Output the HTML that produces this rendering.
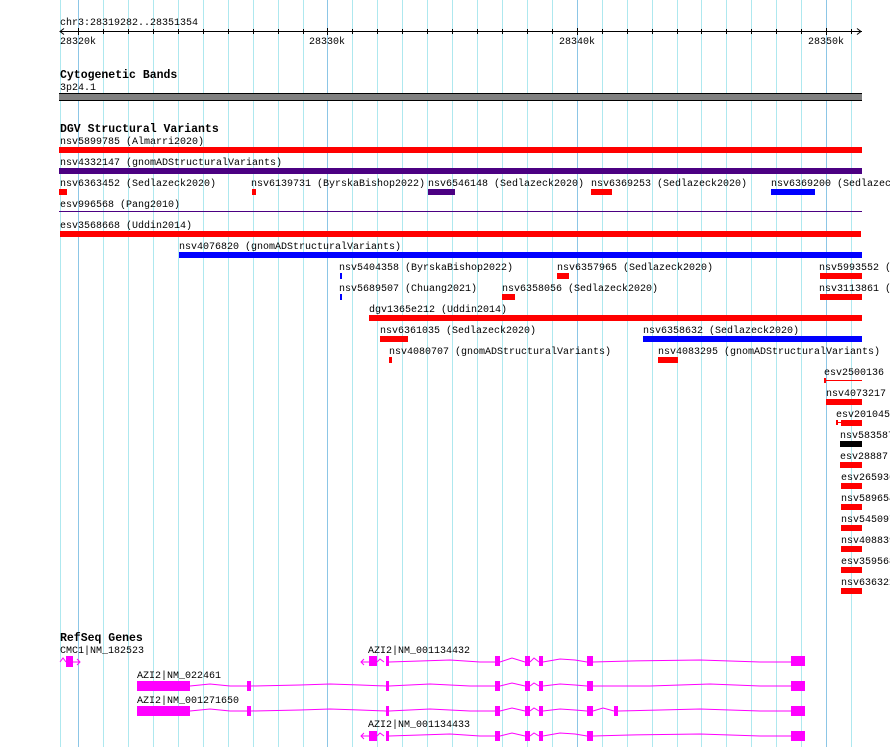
<!DOCTYPE html>
<html><head><meta charset="utf-8"><style>
html,body{margin:0;padding:0;background:#fff;width:890px;height:747px;overflow:hidden}
svg{display:block}
text{font-family:"Liberation Mono","DejaVu Sans Mono",monospace;font-size:10px;fill:#000}
.h{font-weight:bold;font-size:11.5px}
.g{stroke:#aee8ef;stroke-width:1}
.gd{stroke:#8cc6e6;stroke-width:1}
.r{fill:#f00}.p{fill:#4b0082}.b{fill:#00f}.m{fill:#f0f}
</style></head><body>
<svg width="890" height="747" xmlns="http://www.w3.org/2000/svg">
<g>
<line class="g" x1="60.5" y1="0" x2="60.5" y2="747"/>
<line class="gd" x1="78.5" y1="0" x2="78.5" y2="747"/>
<line class="g" x1="103.5" y1="0" x2="103.5" y2="747"/>
<line class="g" x1="128.5" y1="0" x2="128.5" y2="747"/>
<line class="g" x1="153.5" y1="0" x2="153.5" y2="747"/>
<line class="g" x1="178.5" y1="0" x2="178.5" y2="747"/>
<line class="g" x1="203.5" y1="0" x2="203.5" y2="747"/>
<line class="g" x1="228.5" y1="0" x2="228.5" y2="747"/>
<line class="g" x1="253.5" y1="0" x2="253.5" y2="747"/>
<line class="g" x1="278.5" y1="0" x2="278.5" y2="747"/>
<line class="g" x1="303.5" y1="0" x2="303.5" y2="747"/>
<line class="gd" x1="327.5" y1="0" x2="327.5" y2="747"/>
<line class="g" x1="352.5" y1="0" x2="352.5" y2="747"/>
<line class="g" x1="377.5" y1="0" x2="377.5" y2="747"/>
<line class="g" x1="402.5" y1="0" x2="402.5" y2="747"/>
<line class="g" x1="427.5" y1="0" x2="427.5" y2="747"/>
<line class="g" x1="452.5" y1="0" x2="452.5" y2="747"/>
<line class="g" x1="477.5" y1="0" x2="477.5" y2="747"/>
<line class="g" x1="502.5" y1="0" x2="502.5" y2="747"/>
<line class="g" x1="527.5" y1="0" x2="527.5" y2="747"/>
<line class="g" x1="552.5" y1="0" x2="552.5" y2="747"/>
<line class="gd" x1="577.5" y1="0" x2="577.5" y2="747"/>
<line class="g" x1="602.5" y1="0" x2="602.5" y2="747"/>
<line class="g" x1="627.5" y1="0" x2="627.5" y2="747"/>
<line class="g" x1="652.5" y1="0" x2="652.5" y2="747"/>
<line class="g" x1="677.5" y1="0" x2="677.5" y2="747"/>
<line class="g" x1="701.5" y1="0" x2="701.5" y2="747"/>
<line class="g" x1="726.5" y1="0" x2="726.5" y2="747"/>
<line class="g" x1="751.5" y1="0" x2="751.5" y2="747"/>
<line class="g" x1="776.5" y1="0" x2="776.5" y2="747"/>
<line class="g" x1="801.5" y1="0" x2="801.5" y2="747"/>
<line class="gd" x1="826.5" y1="0" x2="826.5" y2="747"/>
<line class="g" x1="851.5" y1="0" x2="851.5" y2="747"/>
</g>
<!-- ruler -->
<text x="60" y="25">chr3:28319282..28351354</text>
<line x1="60" y1="31.5" x2="862" y2="31.5" stroke="#000"/>
<path d="M64 28.5 L60 31.5 L64 34.5 M857 28.5 L861 31.5 L857 34.5" stroke="#000" fill="none"/>
<g stroke="#000">
<line x1="78.5" y1="28" x2="78.5" y2="35"/><line x1="103.5" y1="29" x2="103.5" y2="34"/><line x1="128.5" y1="29" x2="128.5" y2="34"/><line x1="153.5" y1="29" x2="153.5" y2="34"/><line x1="178.5" y1="29" x2="178.5" y2="34"/><line x1="203.5" y1="29" x2="203.5" y2="34"/><line x1="228.5" y1="29" x2="228.5" y2="34"/><line x1="253.5" y1="29" x2="253.5" y2="34"/><line x1="278.5" y1="29" x2="278.5" y2="34"/><line x1="303.5" y1="29" x2="303.5" y2="34"/><line x1="327.5" y1="28" x2="327.5" y2="35"/><line x1="352.5" y1="29" x2="352.5" y2="34"/><line x1="377.5" y1="29" x2="377.5" y2="34"/><line x1="402.5" y1="29" x2="402.5" y2="34"/><line x1="427.5" y1="29" x2="427.5" y2="34"/><line x1="452.5" y1="29" x2="452.5" y2="34"/><line x1="477.5" y1="29" x2="477.5" y2="34"/><line x1="502.5" y1="29" x2="502.5" y2="34"/><line x1="527.5" y1="29" x2="527.5" y2="34"/><line x1="552.5" y1="29" x2="552.5" y2="34"/><line x1="577.5" y1="28" x2="577.5" y2="35"/><line x1="602.5" y1="29" x2="602.5" y2="34"/><line x1="627.5" y1="29" x2="627.5" y2="34"/><line x1="652.5" y1="29" x2="652.5" y2="34"/><line x1="677.5" y1="29" x2="677.5" y2="34"/><line x1="701.5" y1="29" x2="701.5" y2="34"/><line x1="726.5" y1="29" x2="726.5" y2="34"/><line x1="751.5" y1="29" x2="751.5" y2="34"/><line x1="776.5" y1="29" x2="776.5" y2="34"/><line x1="801.5" y1="29" x2="801.5" y2="34"/><line x1="826.5" y1="28" x2="826.5" y2="35"/><line x1="851.5" y1="29" x2="851.5" y2="34"/>
</g>
<text x="60" y="44">28320k</text>
<text x="309" y="44">28330k</text>
<text x="559" y="44">28340k</text>
<text x="808" y="44">28350k</text>
<!-- cytoband -->
<text class="h" x="60" y="78">Cytogenetic Bands</text>
<text x="60" y="90">3p24.1</text>
<rect x="59" y="93" width="803" height="8" fill="#000"/>
<rect x="59" y="94" width="803" height="6" fill="#808080"/>
<!-- DGV -->
<text class="h" x="60" y="132">DGV Structural Variants</text>
<text x="60" y="144">nsv5899785 (Almarri2020)</text>
<rect class="r" x="59" y="147" width="803" height="6"/>
<text x="60" y="165">nsv4332147 (gnomADStructuralVariants)</text>
<rect class="p" x="59" y="168" width="803" height="6"/>
<text x="60" y="186">nsv6363452 (Sedlazeck2020)</text>
<text x="251" y="186">nsv6139731 (ByrskaBishop2022)</text>
<text x="428" y="186">nsv6546148 (Sedlazeck2020)</text>
<text x="591" y="186">nsv6369253 (Sedlazeck2020)</text>
<text x="771" y="186">nsv6369200 (Sedlazeck2020)</text>
<rect class="r" x="59" y="189" width="8" height="6"/>
<rect class="r" x="252" y="189" width="4" height="6"/>
<rect class="p" x="428" y="189" width="27" height="6"/>
<rect class="r" x="591" y="189" width="21" height="6"/>
<rect class="b" x="771" y="189" width="44" height="6"/>
<text x="60" y="207">esv996568 (Pang2010)</text>
<rect class="p" x="59" y="211" width="803" height="1"/>
<text x="60" y="228">esv3568668 (Uddin2014)</text>
<rect class="r" x="60" y="231" width="801" height="6"/>
<text x="179" y="249">nsv4076820 (gnomADStructuralVariants)</text>
<rect class="b" x="179" y="252" width="683" height="6"/>
<text x="339" y="270">nsv5404358 (ByrskaBishop2022)</text>
<text x="557" y="270">nsv6357965 (Sedlazeck2020)</text>
<text x="819" y="270">nsv5993552 (Sedlazeck2020)</text>
<rect class="b" x="340" y="273" width="2" height="6"/>
<rect class="r" x="557" y="273" width="12" height="6"/>
<rect class="r" x="820" y="273" width="42" height="6"/>
<text x="339" y="291">nsv5689507 (Chuang2021)</text>
<text x="502" y="291">nsv6358056 (Sedlazeck2020)</text>
<text x="819" y="291">nsv3113861 (Sedlazeck2020)</text>
<rect class="b" x="340" y="294" width="2" height="6"/>
<rect class="r" x="502" y="294" width="13" height="6"/>
<rect class="r" x="820" y="294" width="42" height="6"/>
<text x="369" y="312">dgv1365e212 (Uddin2014)</text>
<rect class="r" x="369" y="315" width="493" height="6"/>
<text x="380" y="333">nsv6361035 (Sedlazeck2020)</text>
<text x="643" y="333">nsv6358632 (Sedlazeck2020)</text>
<rect class="r" x="380" y="336" width="28" height="6"/>
<rect class="b" x="643" y="336" width="219" height="6"/>
<text x="389" y="354">nsv4080707 (gnomADStructuralVariants)</text>
<text x="658" y="354">nsv4083295 (gnomADStructuralVariants)</text>
<rect class="r" x="389" y="357" width="3" height="6"/>
<rect class="r" x="658" y="357" width="20" height="6"/>
<text x="824" y="375">esv2500136</text>
<rect class="r" x="824" y="380" width="38" height="1"/>
<rect class="r" x="824" y="378" width="2" height="5"/>
<text x="826" y="396">nsv4073217</text>
<rect class="r" x="826" y="399" width="36" height="6"/>
<text x="836" y="417">esv201045</text>
<rect class="r" x="836" y="422" width="6" height="1"/>
<rect class="r" x="836" y="420" width="2" height="5"/>
<rect class="r" x="841" y="420" width="21" height="6"/>
<text x="840" y="438">nsv583587</text>
<rect x="840" y="441" width="22" height="6" fill="#000"/>
<text x="840" y="459">esv28887</text>
<rect class="r" x="840" y="462" width="22" height="6"/>
<text x="841" y="480">esv2659366</text>
<rect class="r" x="841" y="483" width="21" height="6"/>
<text x="841" y="501">nsv589654</text>
<rect class="r" x="841" y="504" width="21" height="6"/>
<text x="841" y="522">nsv545097</text>
<rect class="r" x="841" y="525" width="21" height="6"/>
<text x="841" y="543">nsv408839</text>
<rect class="r" x="841" y="546" width="21" height="6"/>
<text x="841" y="564">esv3595684</text>
<rect class="r" x="841" y="567" width="21" height="6"/>
<text x="841" y="585">nsv636321</text>
<rect class="r" x="841" y="588" width="21" height="6"/>
<!-- RefSeq -->
<text class="h" x="60" y="641">RefSeq Genes</text>
<text x="60" y="653">CMC1|NM_182523</text>
<g stroke="#f0f" fill="none">
<path d="M60 662 L63 658 L66 662 M73 662 L80 662 M77 659 L80 662 L77 665"/>
<path d="M361 662 L369 662 M364 659 L361 662 L364 665 M377 662 L380 659 L384 662 M389 662 L420 661 L450 660 L480 662 L495 662 M500 662 L512 658 L525 662 M530 662 L534 658 L539 662 M543 662 L560 659 L575 660 L587 662 M593 662 L630 661 L700 660 L760 662 L791 662"/>
<path d="M190 686 L210 684 L230 686 L247 686 M251 686 L300 685 L330 684 L360 685 L386 686 M389 686 L430 684 L470 686 L495 686 M500 686 L512 683 L525 686 M530 686 L534 683 L539 686 M543 686 L560 684 L575 685 L587 686 M593 686 L650 686 L680 685 L710 684 L760 686 L791 686"/>
<path d="M190 711 L210 709 L230 711 L247 711 M251 711 L300 710 L330 709 L360 710 L386 711 M389 711 L430 709 L470 711 L495 711 M500 711 L512 708 L525 711 M530 711 L534 708 L539 711 M543 711 L560 709 L575 710 L587 711 M593 711 L603 708 L614 711 M618 711 L660 710 L700 709 L760 711 L791 711"/>
<path d="M361 736 L369 736 M364 733 L361 736 L364 739 M377 736 L380 733 L384 736 M389 736 L420 735 L450 734 L480 736 L495 736 M500 736 L512 733 L525 736 M530 736 L534 733 L539 736 M543 736 L560 733 L575 734 L587 736 M593 736 L630 735 L700 734 L760 736 L791 736"/>
</g>
<rect class="m" x="66" y="656" width="7" height="11"/>
<text x="368" y="653">AZI2|NM_001134432</text>
<rect class="m" x="369" y="656" width="8" height="10"/>
<rect class="m" x="386" y="656" width="3" height="10"/>
<rect class="m" x="495" y="656" width="5" height="10"/>
<rect class="m" x="525" y="656" width="5" height="10"/>
<rect class="m" x="539" y="656" width="4" height="10"/>
<rect class="m" x="587" y="656" width="6" height="10"/>
<rect class="m" x="791" y="656" width="14" height="10"/>
<text x="137" y="678">AZI2|NM_022461</text>
<rect class="m" x="137" y="681" width="53" height="10"/>
<rect class="m" x="247" y="681" width="4" height="10"/>
<rect class="m" x="386" y="681" width="3" height="10"/>
<rect class="m" x="495" y="681" width="5" height="10"/>
<rect class="m" x="525" y="681" width="5" height="10"/>
<rect class="m" x="539" y="681" width="4" height="10"/>
<rect class="m" x="587" y="681" width="6" height="10"/>
<rect class="m" x="791" y="681" width="14" height="10"/>
<text x="137" y="703">AZI2|NM_001271650</text>
<rect class="m" x="137" y="706" width="53" height="10"/>
<rect class="m" x="247" y="706" width="4" height="10"/>
<rect class="m" x="386" y="706" width="3" height="10"/>
<rect class="m" x="495" y="706" width="5" height="10"/>
<rect class="m" x="525" y="706" width="5" height="10"/>
<rect class="m" x="539" y="706" width="4" height="10"/>
<rect class="m" x="587" y="706" width="6" height="10"/>
<rect class="m" x="614" y="706" width="4" height="10"/>
<rect class="m" x="791" y="706" width="14" height="10"/>
<text x="368" y="727">AZI2|NM_001134433</text>
<rect class="m" x="369" y="731" width="8" height="10"/>
<rect class="m" x="386" y="731" width="3" height="10"/>
<rect class="m" x="495" y="731" width="5" height="10"/>
<rect class="m" x="525" y="731" width="5" height="10"/>
<rect class="m" x="539" y="731" width="4" height="10"/>
<rect class="m" x="587" y="731" width="6" height="10"/>
<rect class="m" x="791" y="731" width="14" height="10"/>
</svg>
</body></html>
